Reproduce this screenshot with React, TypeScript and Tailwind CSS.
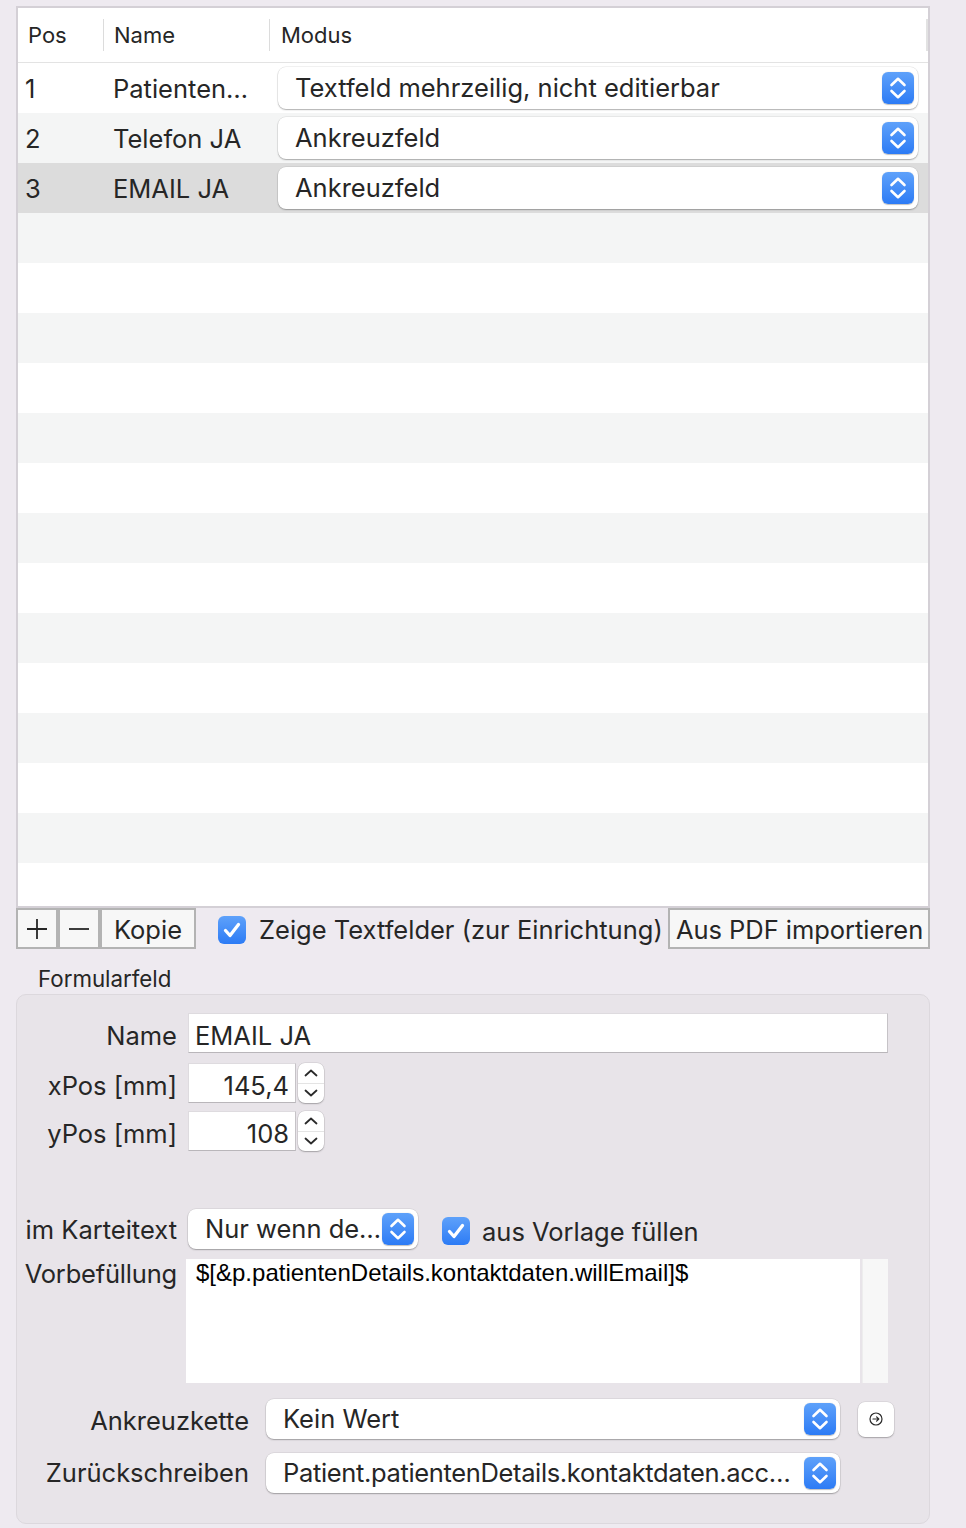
import React from "react";

function BlueStepper() {
  return (
    <div className="w-[32px] h-[32px] rounded-[6px] bg-gradient-to-b from-[#5ea1fa] to-[#2c7bf5] flex items-center justify-center shrink-0 shadow-[0_0.5px_1px_rgba(0,0,0,0.25)]">
      <svg width="32" height="32" viewBox="0 0 32 32" fill="none" stroke="white" strokeWidth="2.6" strokeLinecap="round" strokeLinejoin="round">
        <path d="M9.5 13 L16 6.8 L22.5 13" />
        <path d="M9.5 19 L16 25.2 L22.5 19" />
      </svg>
    </div>
  );
}

function Popup({ text, w, h, tc = "" }: { text: string; w: string; h: string; tc?: string }) {
  return (
    <div className={`${w} ${h} flex items-center bg-white rounded-[8px] shadow-[0_0_0_0.5px_rgba(0,0,0,0.10),0_1px_1.5px_rgba(0,0,0,0.28)] pl-[17px] pr-[4px] shrink-0`}>
      <span className={`flex-1 min-w-0 whitespace-nowrap overflow-hidden ${tc}`}>{text}</span>
      <BlueStepper />
    </div>
  );
}

function Checkbox() {
  return (
    <div className="w-[28px] h-[28px] rounded-[6px] bg-gradient-to-b from-[#5ea1fa] to-[#2c7bf5] flex items-center justify-center shrink-0">
      <svg width="28" height="28" viewBox="0 0 28 28" fill="none" stroke="white" strokeWidth="3.3" strokeLinecap="round" strokeLinejoin="round">
        <path d="M7.5 14.5 L12 19.5 L20.5 8.5" />
      </svg>
    </div>
  );
}

function GrayStepper() {
  return (
    <div className="w-[26px] h-[40px] ml-[2px] rounded-[7px] bg-white shadow-[0_0_0_0.5px_rgba(0,0,0,0.12),0_1px_1.5px_rgba(0,0,0,0.25)] flex flex-col shrink-0">
      <div className="flex-1 flex items-center justify-center border-b border-[#e4e4e4]">
        <svg width="16" height="10" viewBox="0 0 16 10" fill="none" stroke="#2a2a2a" strokeWidth="1.8" strokeLinecap="round" strokeLinejoin="round">
          <path d="M2.5 7.5 L8 2.5 L13.5 7.5" />
        </svg>
      </div>
      <div className="flex-1 flex items-center justify-center">
        <svg width="16" height="10" viewBox="0 0 16 10" fill="none" stroke="#2a2a2a" strokeWidth="1.8" strokeLinecap="round" strokeLinejoin="round">
          <path d="M2.5 2.5 L8 7.5 L13.5 2.5" />
        </svg>
      </div>
    </div>
  );
}

const rows = [
  { pos: "1", name: "Patienten…", mode: "Textfeld mehrzeilig, nicht editierbar" },
  { pos: "2", name: "Telefon JA", mode: "Ankreuzfeld" },
  { pos: "3", name: "EMAIL JA", mode: "Ankreuzfeld" },
];

export default function App() {
  const empty = Array.from({ length: 14 }, (_, i) => i + 3);
  return (
    <div className="w-[966px] h-[1528px] bg-[#eeeaf0] pt-[6px] pl-[16px] text-[#262626] [font-family:Inter,'Noto_Sans',sans-serif] overflow-hidden">
      {/* Table */}
      <div className="w-[914px] h-[902px] border-2 border-[#d4d0d6] bg-white flex flex-col overflow-hidden">
        <div className="h-[55px] shrink-0 border-b border-[#e3e3e3] flex items-center text-[22px]">
          <div className="w-[85px] pl-[10px]">Pos</div>
          <div className="w-px h-[32px] bg-[#dcdcdc]" />
          <div className="w-[165px] pl-[10px]">Name</div>
          <div className="w-px h-[32px] bg-[#dcdcdc]" />
          <div className="w-[656px] pl-[11px]">Modus</div>
          <div className="w-[2px] h-[32px] bg-[#e2e2e2]" />
        </div>
        {rows.map((r, i) => (
          <div
            key={r.pos}
            className={`h-[50px] shrink-0 flex items-center text-[25.5px] ${i === 2 ? "bg-[#dcdcdc]" : i === 1 ? "bg-[#f4f5f5]" : "bg-white"}`}
          >
            <div className="w-[95px] pl-[7px] pt-[2px]">{r.pos}</div>
            <div className="w-[165px] truncate pt-[2px]">{r.name}</div>
            <Popup text={r.mode} w="w-[640px]" h="h-[42px]" />
          </div>
        ))}
        {empty.map((i) => (
          <div key={i} className={`h-[50px] shrink-0 ${i % 2 === 1 ? "bg-[#f4f5f5]" : "bg-white"}`} />
        ))}
      </div>

      {/* Bottom bar */}
      <div className="w-[914px] h-[41px] flex items-center text-[25.5px]">
        <div className="w-[42px] h-[41px] border-2 border-[#b3b3b3] bg-[#f7f7f7] flex items-center justify-center">
          <svg width="22" height="22" viewBox="0 0 22 22" stroke="#262626" strokeWidth="1.8">
            <path d="M11 1 V21 M1 11 H21" />
          </svg>
        </div>
        <div className="w-[42px] h-[41px] border-2 border-[#b3b3b3] bg-[#f7f7f7] flex items-center justify-center">
          <svg width="22" height="22" viewBox="0 0 22 22" stroke="#262626" strokeWidth="1.8">
            <path d="M1 11 H21" />
          </svg>
        </div>
        <div className="w-[96px] h-[41px] border-2 border-[#b3b3b3] bg-[#f7f7f7] flex items-center justify-center pt-[4px]">
          Kopie
        </div>
        <div className="ml-[22px] pt-[2px]">
          <Checkbox />
        </div>
        <span className="ml-[13px] whitespace-nowrap pt-[4px]">Zeige Textfelder (zur Einrichtung)</span>
        <div className="ml-auto w-[262px] h-[41px] border-2 border-[#b3b3b3] bg-[#f7f7f7] flex items-center pl-[6px] pt-[3px] whitespace-nowrap tracking-[-0.05px]">
          Aus PDF importieren
        </div>
      </div>

      {/* Group label */}
      <div className="h-[45px] pl-[22px] pt-[17px] text-[22.3px] leading-[26px]">Formularfeld</div>

      {/* Group box */}
      <div className="w-[914px] h-[530px] rounded-[10px] bg-[#e8e4e9] border border-[#dcd8dd] flex flex-col pt-[18px] text-[25.5px]">
        {/* Name */}
        <div className="flex items-center h-[40px]">
          <div className="w-[160px] text-right pt-[6px]">Name</div>
          <div className="ml-[11px] w-[700px] h-[40px] bg-white border border-[#dedbdf] border-b-[#b9b6ba] border-r-[#c6c3c7] flex items-center pl-[6px] pt-[6px]">
            EMAIL JA
          </div>
        </div>
        {/* xPos */}
        <div className="flex items-center h-[40px] mt-[10px]">
          <div className="w-[160px] text-right pt-[6px]">xPos [mm]</div>
          <div className="ml-[11px] w-[108px] h-[40px] bg-white border border-[#dedbdf] border-b-[#b9b6ba] border-r-[#c6c3c7] flex items-center justify-end pr-[6px] pt-[6px]">
            145,4
          </div>
          <GrayStepper />
        </div>
        {/* yPos */}
        <div className="flex items-center h-[40px] mt-[8px]">
          <div className="w-[160px] text-right pt-[6px]">yPos [mm]</div>
          <div className="ml-[11px] w-[108px] h-[40px] bg-white border border-[#dedbdf] border-b-[#b9b6ba] border-r-[#c6c3c7] flex items-center justify-end pr-[6px] pt-[6px]">
            108
          </div>
          <GrayStepper />
        </div>
        {/* im Karteitext */}
        <div className="flex items-center h-[40px] mt-[58px]">
          <div className="w-[160px] text-right pt-[3px]">im Karteitext</div>
          <div className="ml-[11px]">
            <Popup text="Nur wenn de…" w="w-[230px]" h="h-[40px]" />
          </div>
          <div className="ml-[24px] pt-[4px]">
            <Checkbox />
          </div>
          <span className="ml-[12px] pt-[6px]">aus Vorlage füllen</span>
        </div>
        {/* Vorbefüllung */}
        <div className="flex items-start mt-[10px]">
          <div className="w-[160px] text-right leading-[30px] tracking-[-0.2px]">Vorbefüllung</div>
          <div className="ml-[9px] w-[674px] h-[124px] bg-white pl-[10px] text-[24px] leading-[28px] text-black [font-family:'Liberation_Sans',Arial,sans-serif]">
            $[&amp;p.patientenDetails.kontaktdaten.willEmail]$
          </div>
          <div className="ml-[2px] w-[26px] h-[124px] bg-[#f7f7f7] border-l border-[#ededed]" />
        </div>
        {/* Ankreuzkette */}
        <div className="flex items-center h-[40px] mt-[16px]">
          <div className="w-[232px] text-right pt-[5px]">Ankreuzkette</div>
          <div className="ml-[17px]">
            <Popup text="Kein Wert" w="w-[574px]" h="h-[40px]" />
          </div>
          <div className="ml-[18px] w-[36px] h-[35px] rounded-[7px] bg-white shadow-[0_0_0_0.5px_rgba(0,0,0,0.10),0_1px_1.5px_rgba(0,0,0,0.25)] flex items-center justify-center">
            <svg width="14" height="14" viewBox="0 0 14 14" fill="none" stroke="#2a2a2a" strokeWidth="1.2" strokeLinecap="round" strokeLinejoin="round">
              <circle cx="7" cy="7" r="6" />
              <path d="M4 7 H9.8 M7.6 4.8 L9.8 7 L7.6 9.2" />
            </svg>
          </div>
        </div>
        {/* Zurückschreiben */}
        <div className="flex items-center h-[40px] mt-[14px]">
          <div className="w-[232px] text-right">Zurückschreiben</div>
          <div className="ml-[17px]">
            <Popup text="Patient.patientenDetails.kontaktdaten.acc…" w="w-[574px]" h="h-[40px]" tc="tracking-[-0.35px]" />
          </div>
        </div>
      </div>
    </div>
  );
}
